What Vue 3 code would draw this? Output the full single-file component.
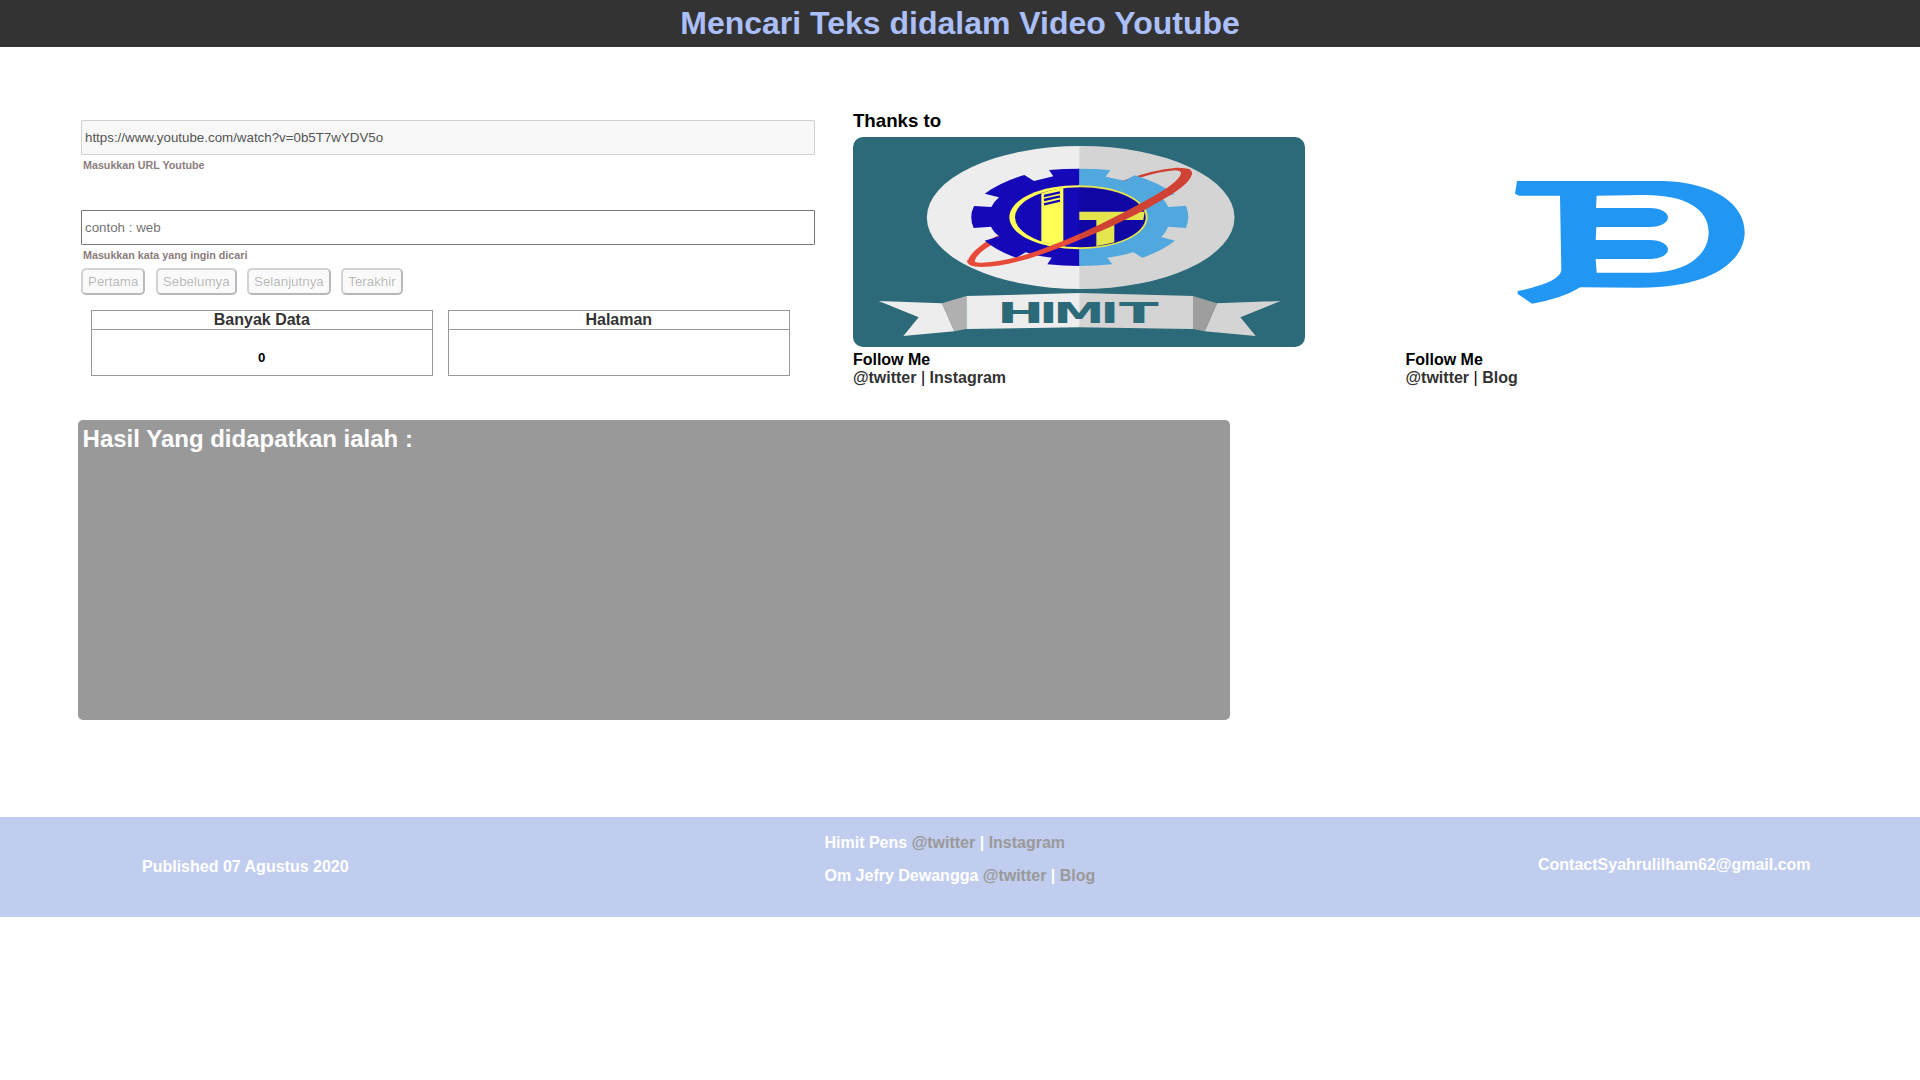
<script setup>
const buttons = ['Pertama', 'Sebelumya', 'Selanjutnya', 'Terakhir']
const tables = [
  { title: 'Banyak Data', value: '0' },
  { title: 'Halaman', value: '' },
]
const url = 'https://www.youtube.com/watch?v=0b5T7wYDV5o'
</script>

<template>
  <header class="header"><h1>Mencari Teks didalam Video Youtube</h1></header>
  <main class="top">
    <section class="form">
      <input type="text" :value="url" disabled />
      <h6 class="first">Masukkan URL Youtube</h6>
      <input type="text" placeholder="contoh : web" />
      <h6>Masukkan kata yang ingin dicari</h6>
      <div class="buttons">
        <button v-for="b in buttons" :key="b" disabled>{{ b }}</button>
      </div>
      <div class="tables">
        <div v-for="t in tables" :key="t.title" class="table">
          <div class="th">{{ t.title }}</div>
          <div class="td">{{ t.value }}</div>
        </div>
      </div>
    </section>

    <section class="thanks">
      <h3>Thanks to</h3>
      <div class="cards">
        <article class="card">
          <svg class="logo" viewBox="39 111 1356 630" preserveAspectRatio="none">
            <rect x="39" y="111" width="1356" height="630" fill="#2c6a79" />
            <ellipse cx="722" cy="352.5" rx="461.5" ry="214.5" fill="#ededed" />
            <g fill="#e84a3a">
              <path d="M382 487 Q386 462 434 428 L475 406 L490 415 Q410 456 404 482 Z" />
              <path d="M846 243 Q940 208 1010 203 Q1056 202 1056 222 L1025 228 Q1028 212 1006 211 Q960 214 890 236 L858 243 Z" />
            </g>
            <path fill="#1408b8" d="M719 206 Q670 206 627 210 L640 229 L582 243 L553 225 Q484 245 434 281 L477 292 Q461 306 454 321 L402 318 Q386 350 401 384 L453 380 Q460 396 478 409 L434 422 Q472 453 529 473 L557 457 Q592 469 635 473 L622 493 Q670 498 719 498 Z" />
            <path fill="#5bbbf9" d="M718 206 Q768 206 811 210 L797 230 L854 242 L884 226 Q955 247 1004 283 L964 292 Q978 306 985 321 L1038 317 Q1052 350 1038 384 L984 380 Q979 396 963 411 L1005 422 Q967 452 907 473 L880 457 Q846 467 802 473 L817 493 Q768 498 718 498 Z" />
            <ellipse cx="715.500" cy="351.500" rx="207.500" ry="96" fill="#ffff57" />
            <ellipse cx="721" cy="351.500" rx="196" ry="90" fill="#1408b8" />
            <path fill="#ffff57" d="M604 280 Q636 268 670 264 V439 Q636 435 604 425 Z M718 335 H914 L910 360 H823 V427 Q800 434 769 438 V360 H718 Z" />
            <path fill="none" stroke="#1408b8" stroke-width="7" d="M612 288 L660 277 M612 300 L660 289 M612 313 L660 302" />
            <path fill="#e84a3a" d="M404 481 Q401 489 426 488 C520 485 620 444 718 402 C810 361 905 311 970 271 Q1025 235 1023 216 L1018 206 L1045 206 Q1056 210 1056 222 Q1050 250 985 289 C900 341 810 384 718 420 C620 460 510 501 425 501 Q378 501 382 480 Z" />
            <path fill="#000" fill-opacity=".1" d="M718 138 H722 A461.500 214.500 0 0 1 722 567 H718 Z" />

            <path fill="#ededed" d="M116 603 L306 610 L343 694 L190 708 L236 652 Z M1321 603 L1131 610 L1094 694 L1247 708 L1201 652 Z M379 588 L718 579 L1059 588 V687 L718 682 L379 687 Z" />
            <path fill="#b0b0b0" d="M306 610 L379 588 V687 L343 694 Z M1131 610 L1059 588 V687 L1094 694 Z" />
            <path fill="#000" fill-opacity=".1" d="M718 579 L1059 588 L1131 610 L1321 603 L1201 652 L1247 708 L1094 694 L1059 687 L718 682 Z" />
            <text y="668.500" class="himit"><tspan x="471" textLength="142" lengthAdjust="spacingAndGlyphs">H</tspan><tspan x="597.500" textLength="55" lengthAdjust="spacingAndGlyphs">I</tspan><tspan x="640" textLength="154" lengthAdjust="spacingAndGlyphs">M</tspan><tspan x="781.500" textLength="55" lengthAdjust="spacingAndGlyphs">I</tspan><tspan x="837" textLength="119" lengthAdjust="spacingAndGlyphs">T</tspan></text>
          </svg>
          <h4>Follow Me</h4>
          <p><a>@twitter</a> | <a>Instagram</a></p>
        </article>
        <article class="card">
          <svg class="logo" viewBox="76 -69 1356 630" preserveAspectRatio="none">
            <path fill="#2196f3" fill-rule="evenodd" d="M412 63 L850 63 C1010 68 1095 135 1095 217 C1095 300 1000 383 780 383 L602 382 Q545 417 457 431 L414 402 V393 Q542 367 545 330 L541 107 H418 L406 101 Z M651 107 L649 144 H808 C884 144 884 201 808 201 H650 L648 240 H808 C884 240 884 297 808 297 H648 L651 338 H810 C920 338 988 285 987 215 C986 145 915 104 790 105 Z" />
          </svg>
          <h4>Follow Me</h4>
          <p><a>@twitter</a> | <a>Blog</a></p>
        </article>
      </div>
    </section>
  </main>

  <section class="result"><h2>Hasil Yang didapatkan ialah :</h2></section>

  <footer class="footer">
    <div class="published">Published 07 Agustus 2020</div>
    <div class="credits">
      <p>Himit Pens <a>@twitter</a> | <a>Instagram</a></p>
      <p>Om Jefry Dewangga <a>@twitter</a> | <a>Blog</a></p>
    </div>
    <div class="contact">ContactSyahrulilham62@gmail.com</div>
  </footer>
</template>

<style>
body {
  font-family: "Liberation Sans", Arial, sans-serif;
  background: #fff;
}
h1, h2, h3, h4, h6, p { margin: 0; }
</style>

<style scoped>
.header {
  background: #333;
  color: #abbffa;
  text-align: center;
  padding: 5px 0;
}
.header h1 { font-size: 32px; line-height: 37px; }
.top {
  display: flex;
  height: 373px;
  box-sizing: border-box;
  padding: 63px 0 0 81px;
}
.form { width: 734px; padding-top: 10px; flex: none; }
input {
  display: block;
  width: 734px;
  height: 35px;
  box-sizing: border-box;
  font-family: inherit;
  font-size: 13.333px;
  appearance: none;
  border: 1px solid #767676;
  border-radius: 1px;
  padding: 2px 3px;
  background: #fff;
}
input:disabled {
  background: #f8f8f8;
  border-color: #d1d1d1;
}
h6 {
  font-size: 10.72px;
  line-height: 12px;
  margin: 4px 0 0 2px;
  color: #8b7d7d;
}
h6.first { margin-bottom: 39px; }
.buttons { display: flex; gap: 10.5px; margin-top: 7px; }
button {
  font-family: inherit;
  font-size: 13.333px;
  line-height: 15px;
  padding: 4px 5px;
  border-width: 2px;
  border-radius: 5px;
}
.tables { display: flex; gap: 15px; margin: 15px 0 0 9.8px; }
.table {
  width: 342px;
  height: 66px;
  box-sizing: border-box;
  border: 1px solid #999;
  text-align: center;
  font-weight: bold;
}
.th {
  color: #333;
  font-size: 16px;
  line-height: 18px;
  border-bottom: 1px solid #999;
}
.td { font-size: 13.28px; line-height: 15px; padding-top: 20px; }
.thanks { margin-left: 37.9px; }
h3 { font-size: 18.72px; line-height: 21px; padding-bottom: 6px; }
.cards { display: flex; gap: 100.600px; }
.card { width: 452px; }
.logo { display: block; width: 452px; height: 210px; border-radius: 10px; }
.himit {
  font-family: "DejaVu Sans", sans-serif;
  font-weight: bold;
  font-size: 83px;
  fill: #2c6a79;
}
h4 { font-size: 16px; line-height: 18px; margin-top: 4px; }
.card p { font-size: 16px; line-height: 18px; }
.card a { color: #333; font-weight: bold; }
.result {
  margin-left: 78px;
  width: 1152px;
  height: 300px;
  box-sizing: border-box;
  padding: 5px 5px 5px 4.6px;
  background: #999;
  border-radius: 5px;
  color: #fff;
}
.result h2 { font-size: 24px; line-height: 27px; }
.footer {
  margin-top: 97px;
  height: 100px;
  background: #c1cdef;
  color: #fff;
  font-size: 16px;
  font-weight: bold;
  line-height: 18px;
  display: flex;
}
.published { margin-left: 142px; width: 682.5px; padding-top: 41px; }
.credits { width: 713.5px; padding-top: 17px; }
.credits p { margin-bottom: 15px; }
.credits a { color: #999; }
.contact { padding-top: 39px; }
</style>
